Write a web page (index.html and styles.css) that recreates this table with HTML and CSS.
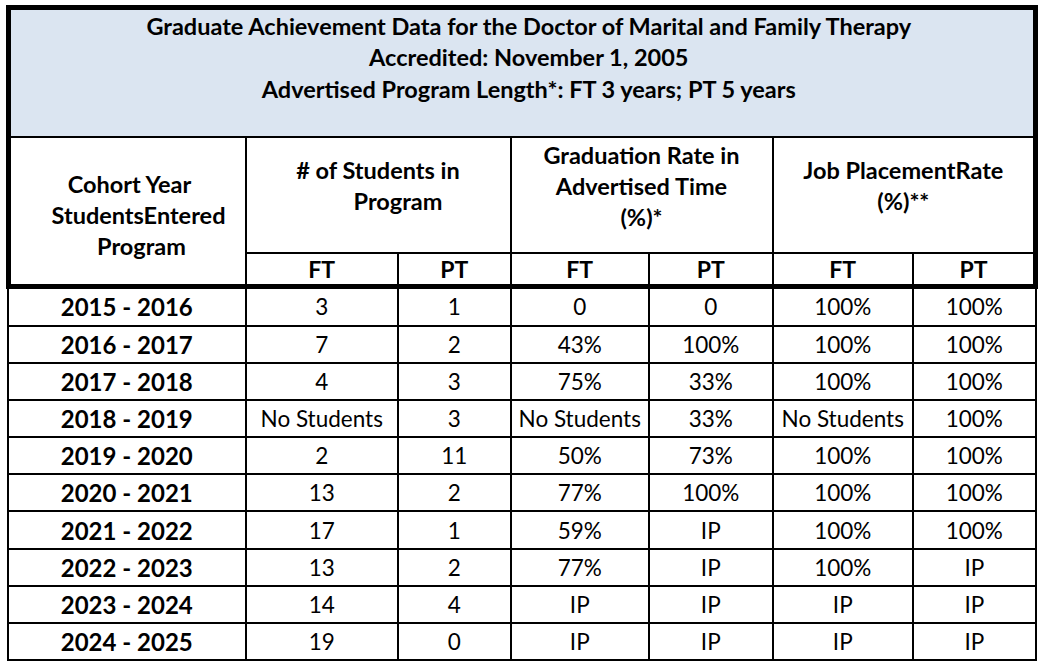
FILE: index.html
```html
<!DOCTYPE html>
<html lang="en">
<head>
<meta charset="utf-8">
<title>Graduate Achievement Data</title>
<link rel="stylesheet" href="styles.css">
</head>
<body>
<table class="report">
  <colgroup>
    <col class="c-year">
    <col class="c-sft">
    <col class="c-spt">
    <col class="c-gft">
    <col class="c-gpt">
    <col class="c-jft">
    <col class="c-jpt">
  </colgroup>
  <thead>
    <tr class="title-row">
      <th colspan="7" class="title">
        <div class="title-text">Graduate Achievement Data for the Doctor of Marital and Family Therapy<br>Accredited: November 1, 2005<br>Advertised Program Length*: FT 3 years; PT 5 years</div>
      </th>
    </tr>
    <tr class="head-row">
      <th rowspan="2" class="cohort"><span class="co1">Cohort Year</span><br><span class="co2">StudentsEntered</span><br><span class="co3">Program</span></th>
      <th colspan="2" class="group"># of Students in<br><span class="indent">Program</span></th>
      <th colspan="2" class="group">Graduation Rate in<br>Advertised Time<br>(%)*</th>
      <th colspan="2" class="group group-last">Job PlacementRate<br>(%)**</th>
    </tr>
    <tr class="sub-row">
      <th>FT</th><th>PT</th><th>FT</th><th>PT</th><th>FT</th><th class="sub-last">PT</th>
    </tr>
  </thead>
  <tbody>
    <tr class="first"><th>2015 - 2016</th><td>3</td><td>1</td><td>0</td><td>0</td><td>100%</td><td>100%</td></tr>
    <tr><th>2016 - 2017</th><td>7</td><td>2</td><td>43%</td><td>100%</td><td>100%</td><td>100%</td></tr>
    <tr><th>2017 - 2018</th><td>4</td><td>3</td><td>75%</td><td>33%</td><td>100%</td><td>100%</td></tr>
    <tr><th>2018 - 2019</th><td>No Students</td><td>3</td><td>No Students</td><td>33%</td><td>No Students</td><td>100%</td></tr>
    <tr><th>2019 - 2020</th><td>2</td><td>11</td><td>50%</td><td>73%</td><td>100%</td><td>100%</td></tr>
    <tr><th>2020 - 2021</th><td>13</td><td>2</td><td>77%</td><td>100%</td><td>100%</td><td>100%</td></tr>
    <tr><th>2021 - 2022</th><td>17</td><td>1</td><td>59%</td><td>IP</td><td>100%</td><td>100%</td></tr>
    <tr><th>2022 - 2023</th><td>13</td><td>2</td><td>77%</td><td>IP</td><td>100%</td><td>IP</td></tr>
    <tr><th>2023 - 2024</th><td>14</td><td>4</td><td>IP</td><td>IP</td><td>IP</td><td>IP</td></tr>
    <tr><th>2024 - 2025</th><td>19</td><td>0</td><td>IP</td><td>IP</td><td>IP</td><td>IP</td></tr>
  </tbody>
</table>
</body>
</html>
```

FILE: styles.css
```css
html, body {
  margin: 0;
  padding: 0;
  background: #ffffff;
}

body {
  font-family: Lato, "Liberation Sans", sans-serif;
  color: #000;
}

.report {
  border-collapse: collapse;
  table-layout: fixed;
  width: 1032.5px;
  margin: 4.5px 0 0 5.5px;
}

.c-year { width: 237.5px; }
.c-sft { width: 152.5px; }
.c-spt { width: 112.5px; }
.c-gft { width: 138.5px; }
.c-gpt { width: 123.5px; }
.c-jft { width: 140.5px; }
.c-jpt { width: 122.5px; }

.report th,
.report td {
  border: 2px solid #000;
  padding: 0;
  text-align: center;
  vertical-align: middle;
}

/* Title block */
.title-row .title {
  background: #dbe5f1;
  border-top: 5px solid #000;
  border-left: 5px solid #000;
  border-right: 5px solid #000;
  border-bottom: 2px solid #000;
  height: 126px;
  vertical-align: top;
  font-weight: 700;
  font-size: 23.5px;
}

.title-text {
  padding: 1px 0 0 14px;
  line-height: 31.5px;
}

/* Header */
.head-row th {
  height: 97px;
  font-weight: 700;
  font-size: 23.5px;
  line-height: 31px;
}

.head-row .group {
  padding-bottom: 17px;
}

.head-row .cohort {
  height: auto;
  border-left: 5px solid #000;
  border-bottom: 5px solid #000;
  vertical-align: top;
  padding-top: 31px;
}

.head-row .group-last {
  border-right: 5px solid #000;
}

.co1 { padding-left: 4px; }
.co2 { padding-left: 22px; }
.co3 { padding-left: 28px; }
.indent { padding-left: 40px; }

.sub-row th {
  height: 30.5px;
  font-weight: 700;
  font-size: 23px;
  border-bottom: 5px solid #000;
}

.sub-row .sub-last {
  border-right: 5px solid #000;
}

/* Body */
tbody tr {
  height: 37.2px;
}

tbody tr.first {
  height: 39px;
}

tbody th {
  font-weight: 700;
  font-size: 24px;
}

tbody td {
  font-weight: 400;
  font-size: 22.5px;
}
```
